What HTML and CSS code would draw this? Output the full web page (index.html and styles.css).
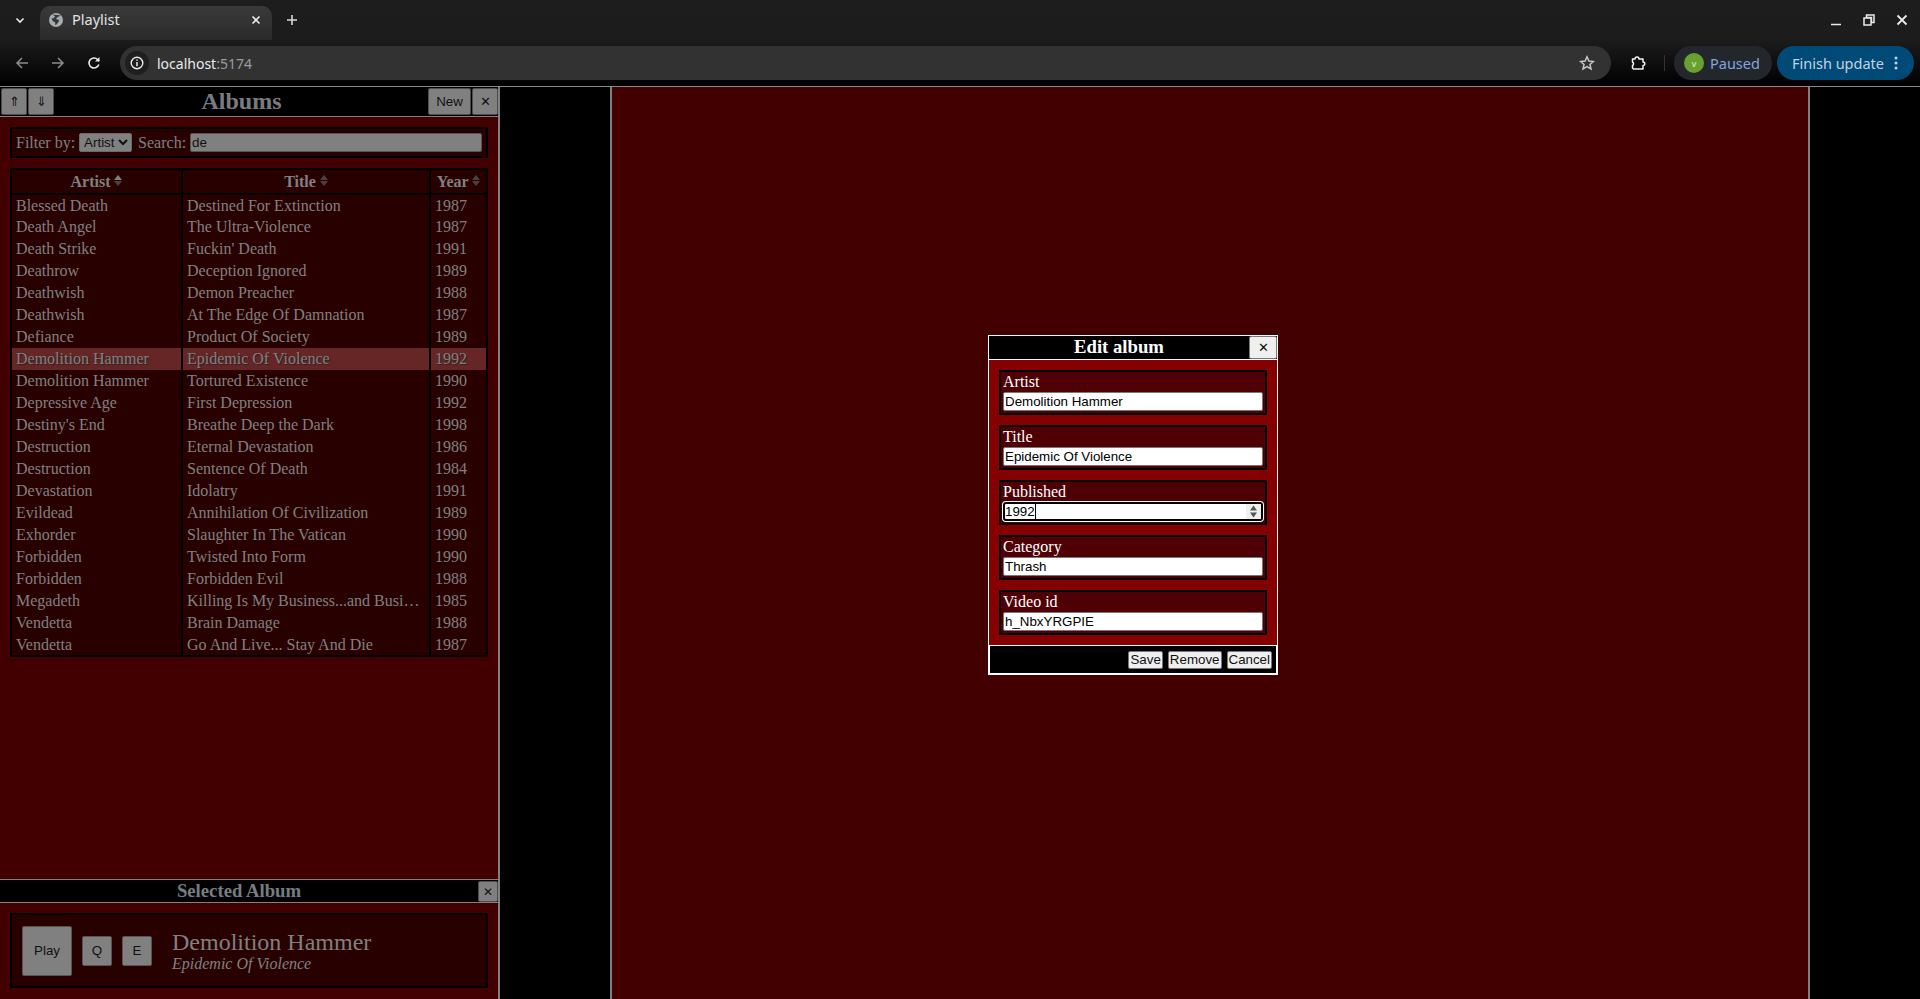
FILE: index.html
```html
<!DOCTYPE html>
<html lang="en">
<head>
  <meta charset="UTF-8" />
  <title>Playlist</title>
  <link rel="stylesheet" href="styles.css">
</head>
<body>
  <div class="browser">
    <div class="tabstrip">
      <div class="tab-menu">
        <svg width="12" height="12" viewBox="0 0 12 12"><path d="M2.5 4.5 6 8l3.500-3.500" fill="none" stroke="#e8eaed" stroke-width="1.600"/></svg>
      </div>
      <div class="tab">
        <svg class="tab-globe" width="16" height="16" viewBox="0 0 16 16"><circle cx="8" cy="8" r="7" fill="#a8abb0"/><path d="M4 2.500 7 4 6 6 3.500 6.500 5 9.500 7 10l.5 3.500 3-3.500.5-2-3-1 1.500-2L12 4l1-.5" fill="#35363a"/></svg>
        <span class="tab-title">Playlist</span>
        <svg class="tab-x" width="10" height="10" viewBox="0 0 10 10"><path d="M1.500 1.500l7 7m0-7l-7 7" stroke="#e8eaed" stroke-width="1.600"/></svg>
      </div>
      <svg class="tab-new" width="12" height="12" viewBox="0 0 12 12"><path d="M6 1v10M1 6h10" stroke="#d5d7da" stroke-width="1.600"/></svg>
      <div class="win-btns">
        <svg width="12" height="12" viewBox="0 0 12 12"><path d="M1 10.500h10" stroke="#e8eaed" stroke-width="1.500"/></svg>
        <svg width="12" height="12" viewBox="0 0 12 12"><path d="M3.500 1h7.500v7.500h-2.500v-5h-5zM1 4h7v7H1z" fill="none" stroke="#e8eaed" stroke-width="1.500"/></svg>
        <svg width="12" height="12" viewBox="0 0 12 12"><path d="M1.500 1.500l9 9m0-9l-9 9" stroke="#e8eaed" stroke-width="1.800"/></svg>
      </div>
    </div>
    <div class="toolbar">
      <svg class="nav-icon" width="14" height="14" viewBox="0 0 14 14"><path d="M13 7H2M7 2 2 7l5 5" fill="none" stroke="#8b8d90" stroke-width="1.500"/></svg>
      <svg class="nav-icon" width="14" height="14" viewBox="0 0 14 14"><path d="M1 7h11M7 2l5 5-5 5" fill="none" stroke="#8b8d90" stroke-width="1.500"/></svg>
      <svg class="nav-icon reload" width="14" height="14" viewBox="0 0 14 14"><path d="M11.800 8.500A5 5 0 1 1 10.600 3.500L12 5" fill="none" stroke="#e8eaed" stroke-width="1.600"/><path d="M12.500 1v4.500H8z" fill="#e8eaed"/></svg>
      <div class="omnibox">
        <div class="site-info">
          <svg width="14" height="14" viewBox="0 0 14 14"><circle cx="7" cy="7" r="5.800" fill="none" stroke="#e8eaed" stroke-width="1.400"/><path d="M7 6v4.200M7 3.600v1.200" stroke="#e8eaed" stroke-width="1.500"/></svg>
        </div>
        <span class="url">localhost<span class="url-port">:5174</span></span>
        <svg class="star" width="16" height="16" viewBox="0 0 16 16"><path d="M8 1.800l1.900 4.200 4.500.5-3.400 3 1 4.500L8 11.700 4 14l1-4.500-3.400-3 4.500-.5z" fill="none" stroke="#c4c7c5" stroke-width="1.500"/></svg>
      </div>
      <svg class="ext-icon" width="16" height="16" viewBox="0 0 16 16"><path d="M2.500 4H5a2 2 0 0 1 4 0h4v3a1.800 1.800 0 0 1 0 3.600V14H3.500l-1-1v-2.500a2 2 0 0 0 0-3.500z" fill="none" stroke="#f1f3f4" stroke-width="1.500" stroke-linejoin="round"/></svg>
      <div class="divider"></div>
      <div class="paused"><span class="avatar">v</span><span>Paused</span></div>
      <div class="update"><span>Finish update</span>
        <svg width="4" height="14" viewBox="0 0 4 14"><circle cx="2" cy="2" r="1.500" fill="#c2d3e0"/><circle cx="2" cy="7" r="1.500" fill="#c2d3e0"/><circle cx="2" cy="12" r="1.500" fill="#c2d3e0"/></svg>
      </div>
    </div>
  </div>

  <div class="app">
    <aside class="sidebar">
      <section class="albums">
        <div class="panel-head">
          <div class="btn-group">
            <button class="head-btn small">⇑</button>
            <button class="head-btn small">⇓</button>
          </div>
          <h2 class="albums-title">Albums</h2>
          <div class="btn-group">
            <button class="head-btn new">New</button>
            <button class="head-btn small">✕</button>
          </div>
        </div>
        <div class="filter">
          <label for="filterBy">Filter by:</label>
          <select id="filterBy" class="filter-select"><option>Artist</option></select>
          <label for="search">Search:</label>
          <input id="search" class="search" type="text" value="de">
        </div>
        <table class="album-table">
          <colgroup><col class="col-artist"><col class="col-title"><col class="col-year"></colgroup>
          <thead>
            <tr>
              <th>Artist <span class="sort"><i class="up on"></i><i class="down"></i></span></th>
              <th>Title <span class="sort"><i class="up"></i><i class="down"></i></span></th>
              <th>Year <span class="sort"><i class="up"></i><i class="down"></i></span></th>
            </tr>
          </thead>
          <tbody>
            <tr><td>Blessed Death</td><td>Destined For Extinction</td><td>1987</td></tr>
            <tr><td>Death Angel</td><td>The Ultra-Violence</td><td>1987</td></tr>
            <tr><td>Death Strike</td><td>Fuckin' Death</td><td>1991</td></tr>
            <tr><td>Deathrow</td><td>Deception Ignored</td><td>1989</td></tr>
            <tr><td>Deathwish</td><td>Demon Preacher</td><td>1988</td></tr>
            <tr><td>Deathwish</td><td>At The Edge Of Damnation</td><td>1987</td></tr>
            <tr><td>Defiance</td><td>Product Of Society</td><td>1989</td></tr>
            <tr class="selected"><td>Demolition Hammer</td><td>Epidemic Of Violence</td><td>1992</td></tr>
            <tr><td>Demolition Hammer</td><td>Tortured Existence</td><td>1990</td></tr>
            <tr><td>Depressive Age</td><td>First Depression</td><td>1992</td></tr>
            <tr><td>Destiny's End</td><td>Breathe Deep the Dark</td><td>1998</td></tr>
            <tr><td>Destruction</td><td>Eternal Devastation</td><td>1986</td></tr>
            <tr><td>Destruction</td><td>Sentence Of Death</td><td>1984</td></tr>
            <tr><td>Devastation</td><td>Idolatry</td><td>1991</td></tr>
            <tr><td>Evildead</td><td>Annihilation Of Civilization</td><td>1989</td></tr>
            <tr><td>Exhorder</td><td>Slaughter In The Vatican</td><td>1990</td></tr>
            <tr><td>Forbidden</td><td>Twisted Into Form</td><td>1990</td></tr>
            <tr><td>Forbidden</td><td>Forbidden Evil</td><td>1988</td></tr>
            <tr><td>Megadeth</td><td>Killing Is My Business...and Busi…</td><td>1985</td></tr>
            <tr><td>Vendetta</td><td>Brain Damage</td><td>1988</td></tr>
            <tr><td>Vendetta</td><td>Go And Live... Stay And Die</td><td>1987</td></tr>
          </tbody>
        </table>
      </section>

      <section class="selected-album">
        <div class="panel-head slim">
          <h3 class="selected-title">Selected Album</h3>
          <button class="head-btn tiny">✕</button>
        </div>
        <div class="selected-body">
          <div class="selected-card">
            <button class="play">Play</button>
            <button class="square">Q</button>
            <button class="square">E</button>
            <div class="selected-text">
              <div class="selected-artist">Demolition Hammer</div>
              <div class="selected-name">Epidemic Of Violence</div>
            </div>
          </div>
        </div>
      </section>
    </aside>

    <main class="stage">
      <div class="stage-centre"></div>
    </main>
  </div>

  <div class="dialog">
    <div class="dialog-head">
      <h3 class="dialog-title">Edit album</h3>
      <button class="dialog-close">✕</button>
    </div>
    <div class="dialog-body">
      <div class="field"><label>Artist</label><input type="text" value="Demolition Hammer"></div>
      <div class="field"><label>Title</label><input type="text" value="Epidemic Of Violence"></div>
      <div class="field"><label>Published</label>
        <div class="number-focus"><span class="number-value">1992</span>
          <svg class="spin" width="15" height="15" viewBox="0 0 15 15"><path d="M7.500 1.500l3.500 5H4zM7.500 13.500l3.500-5H4z" fill="#555"/></svg>
        </div>
      </div>
      <div class="field"><label>Category</label><input type="text" value="Thrash"></div>
      <div class="field"><label>Video id</label><input type="text" value="h_NbxYRGPIE"></div>
    </div>
    <div class="dialog-foot">
      <button>Save</button>
      <button>Remove</button>
      <button>Cancel</button>
    </div>
  </div>
</body>
</html>
```

FILE: styles.css
```css
* {
  box-sizing: border-box;
}

html,
body {
  height: 100%;
}

body {
  margin: 0;
  overflow: hidden;
  display: flex;
  flex-direction: column;
  background-color: #000;
  font-family: "Liberation Serif", serif;
}

/* browser frame */
.browser {
  height: 86px;
  flex: none;
  background: linear-gradient(#1d1d1d 0, #1c1c1c 40px, #000 86px);
  font-family: "Noto Sans", sans-serif;
}

.tabstrip {
  height: 40px;
  display: flex;
  align-items: center;
}

.tab-menu {
  width: 28px;
  margin: 0 6px;
  display: flex;
  justify-content: center;
}

.tab {
  width: 232px;
  height: 34px;
  margin-top: 6px;
  padding: 0 11px 6px 8px;
  display: flex;
  align-items: center;
  border-radius: 10px 10px 0 0;
  background: linear-gradient(#3a3a3a, #2a2a2a);
}

.tab-title {
  margin-left: 8px;
  margin-bottom: 2px;
  flex: 1;
  color: #e3e3e3;
  font-size: 14.500px;
}

.tab-new {
  margin-left: 14px;
}

.win-btns {
  margin-left: auto;
  padding-right: 12px;
  display: flex;
  gap: 21px;
}

.toolbar {
  height: 46px;
  padding: 0 6px 0 15px;
  display: flex;
  align-items: center;
}

.nav-icon {
  margin-right: 22px;
}

.nav-icon.reload {
  margin-right: 19px;
}

.omnibox {
  width: 1491px;
  height: 34px;
  padding: 0 16px 0 5px;
  display: flex;
  align-items: center;
  border-radius: 17px;
  background-color: #323232;
}

.site-info {
  width: 24px;
  height: 24px;
  margin-right: 8px;
  display: flex;
  align-items: center;
  justify-content: center;
  border-radius: 50%;
  background-color: #1f1f1f;
}

.url {
  flex: 1;
  color: #e8eaed;
  font-size: 14px;
}

.url-port {
  color: #9a9da1;
}

.ext-icon {
  margin-left: 19px;
}

.divider {
  width: 1px;
  height: 16px;
  margin: 0 9px 0 18px;
  background-color: #333;
}

.paused {
  width: 98px;
  height: 34px;
  padding-left: 10px;
  display: flex;
  align-items: center;
  gap: 6px;
  border-radius: 17px;
  background-color: #23272c;
  color: #7ea6e0;
  font-size: 14.500px;
}

.avatar {
  width: 20px;
  height: 20px;
  display: flex;
  align-items: center;
  justify-content: center;
  border-radius: 50%;
  background-color: #6aa02f;
  color: #e8f0d8;
  font-size: 9px;
}

.update {
  width: 137px;
  height: 34px;
  margin-left: 5px;
  padding-left: 15px;
  display: flex;
  align-items: center;
  gap: 10px;
  border-radius: 17px;
  background-color: #004a77;
  color: #c2d3e0;
  font-size: 14.500px;
  white-space: nowrap;
}

/* page */
.app {
  flex: 1;
  min-height: 0;
  display: flex;
  border-top: 1px solid #888;
}

.sidebar {
  width: 500px;
  flex: none;
  display: flex;
  flex-direction: column;
  border-right: 2px solid #808080;
  background-color: #430000;
  color: #808080;
}

.albums {
  flex: 1;
}

.panel-head {
  height: 30px;
  display: flex;
  justify-content: space-between;
  background-color: #000;
  border-bottom: 1px solid #808080;
}

.btn-group {
  display: flex;
  gap: 1px;
  padding-left: 1px;
}

.albums-title,
.selected-title {
  flex: 1;
  margin: 0;
  text-align: center;
  font-weight: bold;
  color: #787c82;
}

.albums-title {
  padding-left: 2px;
  font-size: 24px;
  line-height: 28px;
}

.selected-title {
  font-size: 18.720px;
  line-height: 21px;
}

button {
  font-family: "Liberation Sans", sans-serif;
  cursor: pointer;
}

.head-btn {
  height: 27px;
  margin: 1px 0 0;
  padding: 0;
  border: 1px solid #4d4d4d;
  border-radius: 2px;
  background-color: #808080;
  color: #111;
  font-size: 13.333px;
}

.head-btn.small {
  width: 26px;
}

.head-btn.new {
  width: 43px;
}

.filter {
  height: 31px;
  margin: 10px;
  padding: 0 4px;
  display: flex;
  align-items: center;
  gap: 4px;
  border: 2px solid #000;
  background-color: #290000;
  font-size: 16px;
}

.filter-select {
  width: 53px;
  height: 19px;
  margin-right: 2px;
  padding: 0;
  border: 1px solid #6a6a6a;
  border-radius: 2px;
  background-color: #808080;
  color: #111;
  font-family: "Liberation Sans", sans-serif;
  font-size: 13.333px;
}

.search {
  flex: 1;
  min-width: 0;
  height: 19px;
  padding: 0 1px;
  border: 1px solid #555;
  border-radius: 2px;
  background-color: #808080;
  color: #111;
  font-family: "Liberation Sans", sans-serif;
  font-size: 13.333px;
}

.album-table {
  width: 478px;
  margin: 0 10px;
  table-layout: fixed;
  border-collapse: collapse;
  border: 2px solid #000;
  background-color: #290000;
  font-size: 16px;
}

.col-artist {
  width: 171px;
}

.col-title {
  width: 248px;
}

th {
  height: 25px;
  padding: 0;
  border: 2px solid #000;
  font-size: 16px;
  color: #808080;
}

td {
  height: 22px;
  padding: 0 4px;
  border-left: 2px solid #000;
  border-right: 2px solid #000;
  overflow: hidden;
  white-space: nowrap;
}

.selected td {
  background-color: #662626;
  text-shadow: 1px 1px 1px #222;
}

.sort {
  display: inline-block;
  vertical-align: 1px;
  width: 8px;
}

.sort i {
  display: block;
  width: 0;
  height: 0;
  border-left: 4px solid transparent;
  border-right: 4px solid transparent;
}

.sort .up {
  margin-bottom: 1px;
  border-bottom: 5px solid #4d4040;
}

.sort .down {
  border-top: 5px solid #4d4040;
}

.sort .up.on {
  border-bottom-color: #808080;
}

.selected-album {
  flex: none;
}

.panel-head.slim {
  height: 24px;
  border-top: 1px solid #808080;
  border-bottom: 1px solid #808080;
}

.head-btn.tiny {
  width: 20px;
  height: 21px;
  font-size: 12px;
}

.selected-body {
  padding: 10px 10px 11px;
}

.selected-card {
  height: 75px;
  padding: 0 10px;
  display: flex;
  align-items: center;
  border: 2px solid #000;
  background-color: #290000;
}

.play,
.square {
  padding: 0;
  border: 1px solid #555;
  border-radius: 2px;
  background-color: #808080;
  color: #111;
  font-size: 13.333px;
}

.play {
  width: 50px;
  height: 50px;
}

.square {
  width: 30px;
  height: 30px;
  margin-left: 10px;
}

.selected-text {
  margin-left: 20px;
}

.selected-artist {
  font-size: 24px;
  line-height: 26px;
}

.selected-name {
  font-size: 16px;
  font-style: italic;
  line-height: 18px;
}

.stage {
  flex: 1;
  min-width: 0;
  padding: 0 110px;
}

.stage-centre {
  height: 100%;
  border-left: 2px solid #808080;
  border-right: 2px solid #808080;
  background-color: #430000;
}

/* edit dialog, floats over the stage */
.dialog {
  position: absolute;
  left: 988px;
  top: 335px;
  width: 290px;
  border: 1px solid #fff;
  background-color: #000;
  color: #fff;
}

.dialog-head {
  height: 24px;
  display: flex;
  border-bottom: 1px solid #fff;
}

.dialog-title {
  flex: 1;
  margin: 0;
  text-align: center;
  font-size: 18.720px;
  line-height: 22px;
}

.dialog-close {
  width: 28px;
  height: 23px;
  padding: 0;
  border: 1px solid #777;
  border-radius: 2px;
  background-color: #efefef;
  color: #111;
  font-size: 13.333px;
}

.dialog-body {
  padding: 10px;
  display: flex;
  flex-direction: column;
  gap: 10px;
  background-color: #850000;
}

.field {
  height: 45px;
  padding: 0 2px;
  display: flex;
  flex-direction: column;
  border: 2px solid #000;
  background-color: #4f0005;
  font-size: 16px;
  line-height: 20px;
}

.field input,
.number-focus {
  width: 100%;
  height: 19px;
  flex: none;
  padding: 0 1px;
  border: 1px solid #777;
  border-radius: 2px;
  background-color: #fff;
  color: #000;
  font-family: "Liberation Sans", sans-serif;
  font-size: 13.333px;
}

.number-focus {
  display: flex;
  align-items: center;
  justify-content: space-between;
  padding: 0;
  border: 2px solid #000;
  border-radius: 3px;
  box-shadow: 0 0 0 1px #fff;
  line-height: 15px;
}

.number-value {
  border-right: 1px solid #000;
}

.spin {
  background-color: #efefef;
}

.dialog-foot {
  height: 29px;
  padding-right: 4px;
  display: flex;
  align-items: center;
  justify-content: flex-end;
  gap: 5px;
  border: 1px solid #fff;
}

.dialog-foot button {
  height: 18px;
  padding: 0 1px;
  border: 1px solid #777;
  border-radius: 2px;
  background-color: #efefef;
  color: #111;
  font-size: 13.333px;
}
```
